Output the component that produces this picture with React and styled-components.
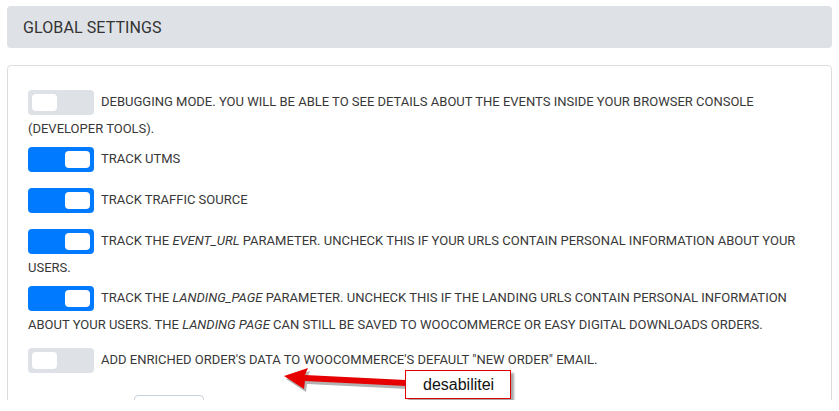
import React from "react";
import styled, { createGlobalStyle } from "styled-components";

const Global = createGlobalStyle`
  html, body { margin: 0; padding: 0; background: #fff; }
  body { font-family: Roboto, "Liberation Sans", sans-serif; color: #333; }
`;

const Page = styled.div`
  position: relative;
  padding: 6px 7px 0;
  height: 394px;
  overflow: hidden;
`;

const Header = styled.div`
  height: 42px;
  background: #dee2e6;
  border-radius: 4px;
  display: flex;
  align-items: center;
  padding-left: 16px;
  font-size: 16px;
  color: #333;
  letter-spacing: 0.1px;
`;

const Card = styled.div`
  margin-top: 17px;
  border: 1px solid #dcdcdc;
  border-radius: 4px;
  padding: 18px 20px 40px;
`;

const Row = styled.div`
  font-size: 13px;
  line-height: 16px;
  text-transform: uppercase;
  color: #383838;
  margin-bottom: 4px;
  margin-top: ${(p) => (p.$spaced ? "9px" : "0")};
`;

const Toggle = styled.span`
  display: inline-block;
  position: relative;
  vertical-align: middle;
  width: 66px;
  height: 25px;
  margin: 6px 7px 6px 0;
  border-radius: 4px;
  background: ${(p) => (p.$on ? "#007bff" : "#dee2e6")};
`;

const Knob = styled.span`
  position: absolute;
  top: 4px;
  left: ${(p) => (p.$on ? "37px" : "4px")};
  width: 25px;
  height: 17px;
  border-radius: 4px;
  background: #fff;
`;

const FieldRow = styled.div`
  margin-top: 16px;
  padding-left: 106px;
`;

const FieldBox = styled.div`
  width: 68px;
  height: 30px;
  border: 1px solid #c8d0da;
  border-radius: 4px;
`;

const Arrow = styled.svg`
  position: absolute;
  left: 280px;
  top: 360px;
  width: 130px;
  height: 38px;
`;

const Note = styled.div`
  position: absolute;
  left: 405px;
  top: 370px;
  width: 106px;
  height: 29px;
  box-sizing: border-box;
  border: 1px solid #e00000;
  background: #fff;
  box-shadow: 3px 3px 2px rgba(0, 0, 0, 0.35);
  font-family: "Liberation Sans", Arial, sans-serif;
  font-size: 16px;
  color: #111;
  display: flex;
  align-items: center;
  padding-left: 17px;
`;

const Switch = ({ on }) => (
  <Toggle $on={on}>
    <Knob $on={on} />
  </Toggle>
);

export default function App() {
  return (
    <>
      <Global />
      <Page>
        <Header>GLOBAL SETTINGS</Header>
        <Card>
          <Row>
            <Switch on={false} />
            Debugging mode. You will be able to see details about the events inside your browser console (developer tools).
          </Row>
          <Row>
            <Switch on />
            Track UTMs
          </Row>
          <Row>
            <Switch on />
            Track traffic source
          </Row>
          <Row>
            <Switch on />
            Track the <em>event_url</em> parameter. Uncheck this if your URLs contain personal information about your users.
          </Row>
          <Row>
            <Switch on />
            Track the <em>landing_page</em> parameter. Uncheck this if the landing URLs contain personal information about your users. The <em>landing page</em> can still be saved to WooCommerce or Easy Digital Downloads orders.
          </Row>
          <Row $spaced>
            <Switch on={false} />
            Add enriched order's data to WooCommerce's default "new order" email.
          </Row>
          <FieldRow>
            <FieldBox />
          </FieldRow>
        </Card>
        <Arrow viewBox="280 360 130 38">
          <polygon
            points="286,379 310,371 307,378 408,383 408,389 307,384 306,392"
            fill="rgba(0,0,0,0.3)"
          />
          <polygon
            points="284,376 308,368 305,375 406,380 406,386 305,381 304,389"
            fill="#e60000"
          />
        </Arrow>
        <Note>desabilitei</Note>
      </Page>
    </>
  );
}
